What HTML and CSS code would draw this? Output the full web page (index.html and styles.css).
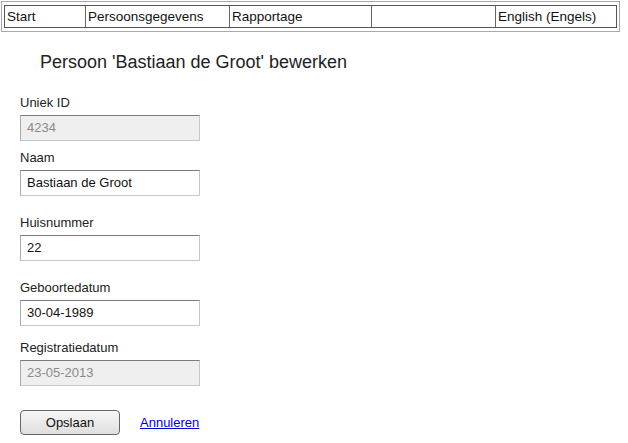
FILE: index.html
```html
<!DOCTYPE html>
<html lang="nl">
<head>
<meta charset="utf-8">
<title>Persoon bewerken</title>
<link rel="stylesheet" href="styles.css">
</head>
<body>
<div class="nav-outer">
  <nav class="nav">
    <div class="nav-cell">Start</div>
    <div class="nav-cell">Persoonsgegevens</div>
    <div class="nav-cell">Rapportage</div>
    <div class="nav-cell"></div>
    <div class="nav-cell nav-cell--last">English (Engels)</div>
  </nav>
</div>
<main class="content">
  <h1 class="title">Persoon 'Bastiaan de Groot' bewerken</h1>
  <div class="field field--first">
    <label class="label">Uniek ID</label>
    <div class="input input--disabled">4234</div>
  </div>
  <div class="field field--tight">
    <label class="label">Naam</label>
    <div class="input">Bastiaan de Groot</div>
  </div>
  <div class="field">
    <label class="label">Huisnummer</label>
    <div class="input">22</div>
  </div>
  <div class="field">
    <label class="label">Geboortedatum</label>
    <div class="input">30-04-1989</div>
  </div>
  <div class="field field--mid">
    <label class="label">Registratiedatum</label>
    <div class="input input--disabled">23-05-2013</div>
  </div>
  <div class="actions">
    <button class="button">Opslaan</button>
    <a class="link" href="#">Annuleren</a>
  </div>
</main>
</body>
</html>
```
FILE: styles.css
```css
html, body {
  margin: 0;
  padding: 0;
  background: #fff;
}
body {
  font-family: "Liberation Sans", Arial, sans-serif;
  color: #111;
  width: 628px;
  height: 443px;
  overflow: hidden;
}
.nav-outer {
  margin: 1px 0 0 1px;
  width: 619px;
  height: 31px;
  box-sizing: border-box;
  border: 1px solid #a8a8a8;
  padding: 3px 2px 3px 2px;
}
.nav {
  display: grid;
  grid-template-columns: 81px 144px 142px 124px 1fr;
  height: 23px;
  box-sizing: border-box;
  border: 1px solid #555;
}
.nav-cell {
  border-right: 1px solid #666;
  font-size: 13.5px;
  line-height: 21px;
  padding-left: 2px;
  white-space: nowrap;
  color: #111;
}
.nav-cell--last {
  border-right: none;
}
.content {
  padding-left: 20px;
}
.title {
  margin: 20px 0 0 20px;
  font-size: 18px;
  line-height: 20px;
  font-weight: normal;
  color: #222;
}
.field {
  margin-top: 19px;
}
.field--first {
  margin-top: 23px;
}
.field--tight {
  margin-top: 9px;
}
.field--mid {
  margin-top: 14px;
}
.label {
  display: block;
  font-size: 13px;
  line-height: 16px;
  height: 16px;
  margin-bottom: 4px;
  color: #222;
}
.input {
  width: 180px;
  height: 26px;
  box-sizing: border-box;
  border: 1px solid #c8c8c8;
  border-top-color: #7a7a7a;
  border-left-color: #aaa;
  padding-left: 6px;
  font-size: 13px;
  line-height: 24px;
  color: #111;
  background: #fff;
}
.input--disabled {
  background: #efefef;
  color: #8a8a8a;
}
.actions {
  margin-top: 24px;
  display: flex;
  align-items: center;
  gap: 20px;
}
.button {
  width: 100px;
  height: 25px;
  box-sizing: border-box;
  border: 1px solid #666;
  border-radius: 4px;
  background: linear-gradient(#f7f7f7, #dedede);
  font-family: "Liberation Sans", Arial, sans-serif;
  font-size: 13px;
  color: #111;
  padding: 0;
}
.link {
  font-size: 13px;
  color: #0000dd;
  text-decoration: underline;
}
```
